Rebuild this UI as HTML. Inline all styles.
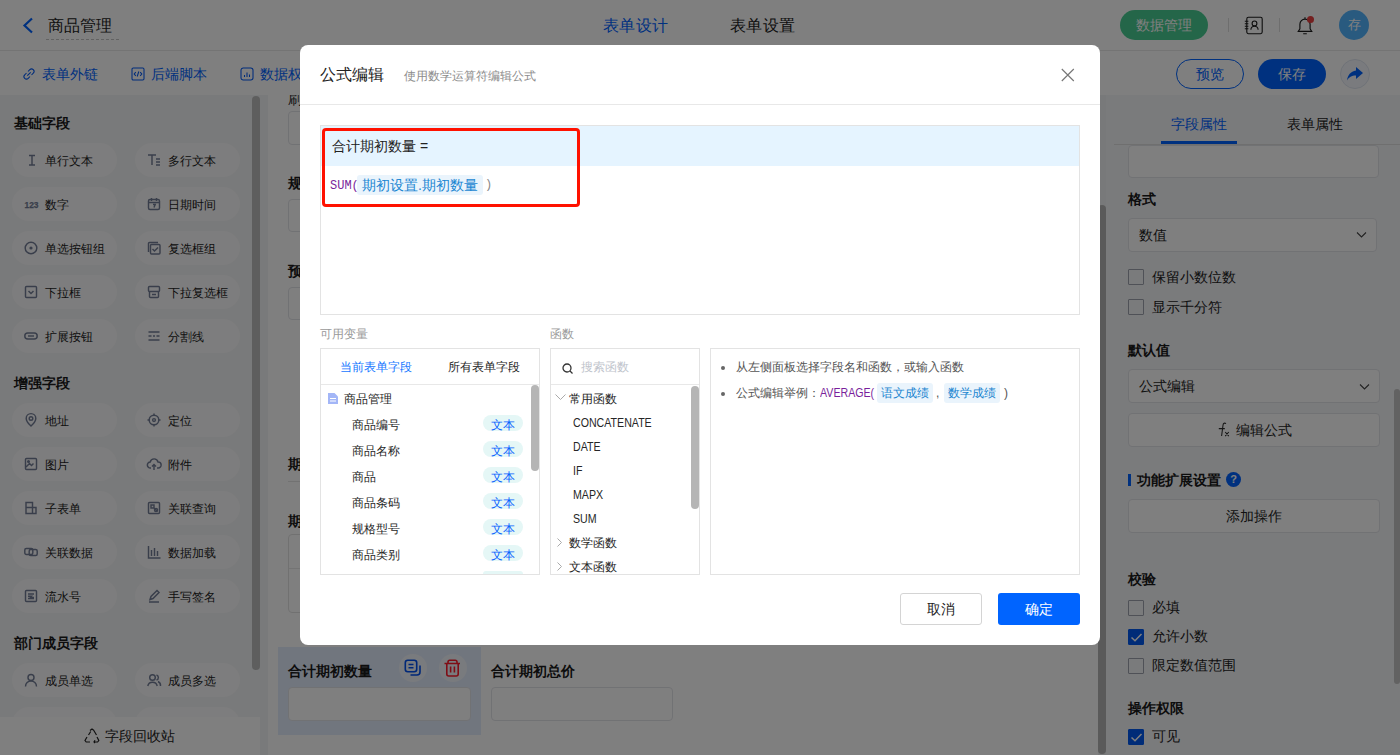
<!DOCTYPE html>
<html><head><meta charset="utf-8">
<style>
*{box-sizing:border-box;margin:0;padding:0}
html,body{width:1400px;height:755px;overflow:hidden}
body{position:relative;font-family:"Liberation Sans",sans-serif;background:#fff;color:#333;font-size:14px}
.a{position:absolute;white-space:nowrap}
svg{overflow:visible}
.chip{position:absolute;width:105px;height:34px;border-radius:17px;background:#fbfbfc}
.ct{position:absolute;font-size:12px;line-height:18px;color:#222}
.sect{position:absolute;left:14px;font-size:14px;font-weight:bold;color:#1a1a1a;line-height:20px}
.inp{position:absolute;border:1px solid #e2e4e9;border-radius:4px;background:#fff}
.cb{position:absolute;left:1128px;width:16px;height:16px;border:1.2px solid #9fa3ae;border-radius:1px;background:transparent}
.cb.on{background:#0058f0;border-color:#0058f0}
.lbl{position:absolute;font-size:14px;color:#222;line-height:20px}
.bl{position:absolute;font-size:14px;font-weight:bold;color:#1a1a1a;line-height:20px}
.ov{position:absolute;left:0;top:0;width:1400px;height:755px;background:rgba(0,0,0,.5)}
.t12{position:absolute;font-size:12px;line-height:17px;color:#262626;white-space:nowrap}
.tag{position:absolute;left:483px;width:40px;height:16px;border-radius:8px;background:#e5f7f6;color:#0a64ff;font-size:12px;line-height:16px;padding-top:2px;text-align:center}
</style></head><body>

<div class="a" style="left:0;top:0;width:1400px;height:51px;background:#fff;border-bottom:1px solid #e9e9e9"></div>
<svg class="a" style="left:22px;top:17px" width="12" height="17" viewBox="0 0 12 17"><path d="M10 1.5L2.5 8.5L10 15.5" fill="none" stroke="#0062ff" stroke-width="2.2"/></svg>
<div class="a" style="left:48px;top:15px;font-size:16px;line-height:22px;color:#222">商品管理</div>
<div class="a" style="left:46px;top:39px;width:73px;border-top:1px dashed #c4c4c4"></div>
<div class="a" style="left:603px;top:15px;font-size:16px;line-height:22px;letter-spacing:0.4px;color:#0062ff">表单设计</div>
<div class="a" style="left:730px;top:15px;font-size:16px;line-height:22px;letter-spacing:0.4px;color:#222">表单设置</div>
<div class="a" style="left:1120px;top:10px;width:88px;height:30px;border-radius:15px;background:#48cc92"></div>
<div class="a" style="left:1136px;top:15px;font-size:14px;line-height:20px;color:#fff">数据管理</div>
<div class="a" style="left:1228px;top:18px;width:1px;height:14px;background:#ddd"></div>
<div class="a" style="left:1279px;top:18px;width:1px;height:14px;background:#ddd"></div>
<svg class="a" style="left:1244px;top:16px" width="20" height="19" viewBox="0 0 20 19" fill="none" stroke="#1a1a1a" stroke-width="1.1"><rect x="2.8" y="1.3" width="15.4" height="16.4" rx="1.6"/><path d="M0.8 5.2h3.6M0.8 7.7h3.6M0.8 10.2h3.6M0.8 12.7h3.6"/><circle cx="10.5" cy="7.4" r="2.4"/><path d="M6.9 13.8a3.6 3.6 0 0 1 7.2 0"/></svg>
<svg class="a" style="left:1296px;top:15px" width="18" height="20" viewBox="0 0 18 20" fill="none" stroke="#1a1a1a" stroke-width="1.15"><path d="M2.3 16.3h13.4l-1.6-2.4V9.2a5.1 5.1 0 0 0-10.2 0v4.7z M7.2 18.7h3.6 M9 2.2v1.8"/></svg>
<div class="a" style="left:1307px;top:16px;width:7px;height:7px;border-radius:4px;background:#e84040"></div>
<div class="a" style="left:1339px;top:10px;width:30px;height:30px;border-radius:15px;background:#52b4ff;color:#fff;font-size:13px;line-height:30px;text-align:center">存</div>
<div class="a" style="left:0;top:51px;width:1400px;height:44px;background:#fff"></div>
<svg class="a" style="left:22px;top:67px" width="14" height="14" viewBox="0 0 14 14" fill="none" stroke="#0058f5" stroke-width="1.05"><path d="M6 4.5l1.8-1.8a2.4 2.4 0 0 1 3.5 3.5L9.5 8M8 9.5l-1.8 1.8a2.4 2.4 0 0 1-3.5-3.5L4.5 6M5.3 8.7l3.4-3.4"/></svg>
<div class="a" style="left:42px;top:64px;font-size:14px;line-height:20px;color:#0062ff">表单外链</div>
<svg class="a" style="left:131px;top:67px" width="14" height="14" viewBox="0 0 14 14" fill="none" stroke="#0058f5" stroke-width="1.05"><rect x="1" y="1" width="12" height="12" rx="1.2"/><path d="M4.8 5.2L3.2 7l1.6 1.8M9.2 5.2L10.8 7 9.2 8.8M7.8 4.5l-1.6 5"/></svg>
<div class="a" style="left:151px;top:64px;font-size:14px;line-height:20px;color:#0062ff">后端脚本</div>
<svg class="a" style="left:240px;top:67px" width="14" height="14" viewBox="0 0 14 14" fill="none" stroke="#0058f5" stroke-width="1.05"><rect x="1" y="1" width="12" height="12" rx="2.2"/><path d="M4.5 10V8M7 10V5.5M9.5 10V7.5"/></svg>
<div class="a" style="left:260px;top:64px;font-size:14px;line-height:20px;color:#0062ff">数据权限</div>
<div class="a" style="left:1176px;top:59px;width:68px;height:30px;border-radius:15px;border:1px solid #0062ff;background:#fff;color:#0062ff;font-size:14px;line-height:28px;text-align:center">预览</div>
<div class="a" style="left:1258px;top:59px;width:68px;height:30px;border-radius:15px;background:#0062ff;color:#fff;font-size:14px;line-height:30px;text-align:center">保存</div>
<div class="a" style="left:1340px;top:59px;width:30px;height:30px;border-radius:15px;border:1px solid #dfe5f0;background:#f4f7fc"></div>
<svg class="a" style="left:1346px;top:66px" width="18" height="16" viewBox="0 0 18 16"><path d="M10 1l7 6-7 6V9.5C5.5 9.5 3 11 1 14.5 1.8 9 4.5 5.5 10 4.5z" fill="#0062ff"/></svg>
<div class="a" style="left:0;top:95px;width:268px;height:660px;background:#f3f4f6"></div>
<div class="sect" style="top:113px">基础字段</div>
<div class="sect" style="top:373px">增强字段</div>
<div class="sect" style="top:633px">部门成员字段</div>
<div class="chip" style="left:12px;top:143px"></div>
<svg class="a" style="left:24px;top:153px" width="14" height="14" viewBox="0 0 14 14" fill="none" stroke="#737d96" stroke-width="1.45"><path d="M5 2.5h6M5 12h6M8 2.5v9.5"/></svg>
<div class="ct" style="left:45px;top:152px">单行文本</div>
<div class="chip" style="left:135px;top:143px"></div>
<svg class="a" style="left:147px;top:153px" width="14" height="14" viewBox="0 0 14 14" fill="none" stroke="#737d96" stroke-width="1.45"><path d="M1 2h8M5 2v10M9 6h4M9 9h4M9 12h4"/></svg>
<div class="ct" style="left:168px;top:152px">多行文本</div>
<div class="chip" style="left:12px;top:187px"></div>
<svg class="a" style="left:24px;top:197px" width="14" height="14" viewBox="0 0 14 14" fill="none" stroke="#737d96" stroke-width="1.45"><text x="0.5" y="10.5" font-size="9" font-weight="bold" textLength="14" lengthAdjust="spacingAndGlyphs" fill="#737d96" stroke="#737d96" stroke-width="0.25" font-family="Liberation Sans">123</text></svg>
<div class="ct" style="left:45px;top:196px">数字</div>
<div class="chip" style="left:135px;top:187px"></div>
<svg class="a" style="left:147px;top:197px" width="14" height="14" viewBox="0 0 14 14" fill="none" stroke="#737d96" stroke-width="1.45"><rect x="1.5" y="2.5" width="11" height="10" rx="1.5"/><path d="M1.5 5.5h11M4.5 1v3M9.5 1v3M6 7.5h2.2l-1.2 3"/></svg>
<div class="ct" style="left:168px;top:196px">日期时间</div>
<div class="chip" style="left:12px;top:231px"></div>
<svg class="a" style="left:24px;top:241px" width="14" height="14" viewBox="0 0 14 14" fill="none" stroke="#737d96" stroke-width="1.45"><circle cx="7" cy="7" r="5.8"/><circle cx="7" cy="7" r="1.6" fill="#737d96" stroke="none"/></svg>
<div class="ct" style="left:45px;top:240px">单选按钮组</div>
<div class="chip" style="left:135px;top:231px"></div>
<svg class="a" style="left:147px;top:241px" width="14" height="14" viewBox="0 0 14 14" fill="none" stroke="#737d96" stroke-width="1.45"><path d="M1.5 11V2.5a1 1 0 0 1 1-1H11"/><rect x="3.5" y="3.5" width="9.5" height="9.5" rx="1"/><path d="M5.5 8l2 2 3.5-3.5"/></svg>
<div class="ct" style="left:168px;top:240px">复选框组</div>
<div class="chip" style="left:12px;top:275px"></div>
<svg class="a" style="left:24px;top:285px" width="14" height="14" viewBox="0 0 14 14" fill="none" stroke="#737d96" stroke-width="1.45"><rect x="1.5" y="1.5" width="11" height="11" rx="1"/><path d="M4.5 6l2.5 2.5L9.5 6"/></svg>
<div class="ct" style="left:45px;top:284px">下拉框</div>
<div class="chip" style="left:135px;top:275px"></div>
<svg class="a" style="left:147px;top:285px" width="14" height="14" viewBox="0 0 14 14" fill="none" stroke="#737d96" stroke-width="1.45"><rect x="1.5" y="1.5" width="11" height="5" rx="1"/><path d="M2.5 6.5v5a1 1 0 0 0 1 1h7a1 1 0 0 0 1-1v-5M5 9.5h4"/></svg>
<div class="ct" style="left:168px;top:284px">下拉复选框</div>
<div class="chip" style="left:12px;top:319px"></div>
<svg class="a" style="left:24px;top:329px" width="14" height="14" viewBox="0 0 14 14" fill="none" stroke="#737d96" stroke-width="1.45"><rect x="0.8" y="4" width="12.4" height="6" rx="3"/><path d="M4 7h6"/></svg>
<div class="ct" style="left:45px;top:328px">扩展按钮</div>
<div class="chip" style="left:135px;top:319px"></div>
<svg class="a" style="left:147px;top:329px" width="14" height="14" viewBox="0 0 14 14" fill="none" stroke="#737d96" stroke-width="1.45"><path d="M1.5 3h11M1.5 7h3M6 7h2M9.5 7h3M1.5 11h11"/></svg>
<div class="ct" style="left:168px;top:328px">分割线</div>
<div class="chip" style="left:12px;top:403px"></div>
<svg class="a" style="left:24px;top:413px" width="14" height="14" viewBox="0 0 14 14" fill="none" stroke="#737d96" stroke-width="1.45"><path d="M7 13s-4.8-4.3-4.8-7.6a4.8 4.8 0 0 1 9.6 0C11.8 8.7 7 13 7 13z"/><circle cx="7" cy="5.5" r="1.8"/></svg>
<div class="ct" style="left:45px;top:412px">地址</div>
<div class="chip" style="left:135px;top:403px"></div>
<svg class="a" style="left:147px;top:413px" width="14" height="14" viewBox="0 0 14 14" fill="none" stroke="#737d96" stroke-width="1.45"><circle cx="7" cy="7" r="4.8"/><circle cx="7" cy="7" r="1.4"/><path d="M7 0.5v2.5M7 11v2.5M0.5 7h2.5M11 7h2.5"/></svg>
<div class="ct" style="left:168px;top:412px">定位</div>
<div class="chip" style="left:12px;top:447px"></div>
<svg class="a" style="left:24px;top:457px" width="14" height="14" viewBox="0 0 14 14" fill="none" stroke="#737d96" stroke-width="1.45"><rect x="1.5" y="1.5" width="11" height="11" rx="1"/><path d="M2 10l3.5-3.5 2 2 2-2"/><circle cx="4.5" cy="4.5" r="0.8"/></svg>
<div class="ct" style="left:45px;top:456px">图片</div>
<div class="chip" style="left:135px;top:447px"></div>
<svg class="a" style="left:147px;top:457px" width="14" height="14" viewBox="0 0 14 14" fill="none" stroke="#737d96" stroke-width="1.45"><path d="M4 11H3.5a3 3 0 0 1-.3-6A4 4 0 0 1 11 5a3 3 0 0 1 .3 6H10M7 13V7.5M5 9.5l2-2 2 2"/></svg>
<div class="ct" style="left:168px;top:456px">附件</div>
<div class="chip" style="left:12px;top:491px"></div>
<svg class="a" style="left:24px;top:501px" width="14" height="14" viewBox="0 0 14 14" fill="none" stroke="#737d96" stroke-width="1.45"><path d="M2 1.5h6.5v11H2zM2 6.5h6.5M8.5 6.5H12v6H8.5"/></svg>
<div class="ct" style="left:45px;top:500px">子表单</div>
<div class="chip" style="left:135px;top:491px"></div>
<svg class="a" style="left:147px;top:501px" width="14" height="14" viewBox="0 0 14 14" fill="none" stroke="#737d96" stroke-width="1.45"><rect x="1.5" y="1.5" width="11" height="11" rx="1"/><path d="M4 4h3v3H4zM7 7l3.5 3.5"/><circle cx="9" cy="9" r="1.5"/></svg>
<div class="ct" style="left:168px;top:500px">关联查询</div>
<div class="chip" style="left:12px;top:535px"></div>
<svg class="a" style="left:24px;top:545px" width="14" height="14" viewBox="0 0 14 14" fill="none" stroke="#737d96" stroke-width="1.45"><rect x="0.8" y="3.5" width="8" height="6" rx="1.5"/><rect x="5.2" y="4.5" width="8" height="6" rx="1.5"/></svg>
<div class="ct" style="left:45px;top:544px">关联数据</div>
<div class="chip" style="left:135px;top:535px"></div>
<svg class="a" style="left:147px;top:545px" width="14" height="14" viewBox="0 0 14 14" fill="none" stroke="#737d96" stroke-width="1.45"><path d="M1.5 1v12h12M4.5 5v6M7.5 3v8M10.5 6v5"/></svg>
<div class="ct" style="left:168px;top:544px">数据加载</div>
<div class="chip" style="left:12px;top:579px"></div>
<svg class="a" style="left:24px;top:589px" width="14" height="14" viewBox="0 0 14 14" fill="none" stroke="#737d96" stroke-width="1.45"><rect x="1.5" y="1.5" width="11" height="11" rx="1"/><path d="M4 5h6M4 7.2h3.5l-1 1.2H10M4 9.5h6"/></svg>
<div class="ct" style="left:45px;top:588px">流水号</div>
<div class="chip" style="left:135px;top:579px"></div>
<svg class="a" style="left:147px;top:589px" width="14" height="14" viewBox="0 0 14 14" fill="none" stroke="#737d96" stroke-width="1.45"><path d="M2 13h10M3 10.5l1-3 6-6 2 2-6 6z"/></svg>
<div class="ct" style="left:168px;top:588px">手写签名</div>
<div class="chip" style="left:12px;top:663px"></div>
<svg class="a" style="left:24px;top:673px" width="14" height="14" viewBox="0 0 14 14" fill="none" stroke="#737d96" stroke-width="1.45"><circle cx="7" cy="4.5" r="3"/><path d="M1.5 13.5a5.5 5.5 0 0 1 11 0"/></svg>
<div class="ct" style="left:45px;top:672px">成员单选</div>
<div class="chip" style="left:135px;top:663px"></div>
<svg class="a" style="left:147px;top:673px" width="14" height="14" viewBox="0 0 14 14" fill="none" stroke="#737d96" stroke-width="1.45"><circle cx="5.5" cy="4.5" r="2.8"/><path d="M0.8 13a4.8 4.8 0 0 1 9.4 0M9.5 2a2.6 2.6 0 0 1 0 5M11 8.5a4.5 4.5 0 0 1 2.5 4.5"/></svg>
<div class="ct" style="left:168px;top:672px">成员多选</div>
<div class="chip" style="left:12px;top:707px"></div>
<div class="chip" style="left:135px;top:707px"></div>
<div class="a" style="left:252px;top:96px;width:8px;height:574px;border-radius:4px;background:#bdbdbd"></div>
<div class="a" style="left:0;top:717px;width:260px;height:38px;background:#fff"></div>
<svg class="a" style="left:84px;top:728px" width="16" height="15" viewBox="0 0 16 15" fill="none" stroke="#222" stroke-width="1.2"><path d="M6 2.5L8 1l2 1.5 M9.5 2l3 5 M13 9l1.8 3.5-1.2 1.5H10 M6 14H2.2L1 12.5 3 9 M4.5 7l2.2-3.5 M11 12.2l-1 1.8 1 1"/></svg>
<div class="a" style="left:105px;top:726px;font-size:14px;line-height:20px;color:#222">字段回收站</div>
<div class="a" style="left:268px;top:95px;width:832px;height:660px;background:#fff"></div>
<div class="a" style="left:1098px;top:95px;width:8px;height:660px;background:#f1f2f4"></div>
<div class="a" style="left:1098px;top:205px;width:8px;height:549px;border-radius:4px;background:#b4b4b4"></div>
<div class="a" style="left:268px;top:95px;width:40px;height:14px;overflow:hidden"><div class="a" style="left:20px;top:-6px;font-size:14px;line-height:20px;color:#333">刷新</div></div>
<div class="inp" style="left:288px;top:111px;width:400px;height:34px"></div>
<div class="bl" style="left:288px;top:173px">规格型号</div>
<div class="inp" style="left:288px;top:199px;width:400px;height:33px"></div>
<div class="bl" style="left:288px;top:261px">预计数量</div>
<div class="inp" style="left:288px;top:287px;width:400px;height:33px"></div>
<div class="bl" style="left:288px;top:454px">期初设置</div>
<div class="a" style="left:288px;top:481px;width:790px;height:1px;background:#e4e4e4"></div>
<div class="bl" style="left:288px;top:511px">期初设置</div>
<div class="inp" style="left:288px;top:534px;width:790px;height:79px;border-color:#e2e2e2"></div>
<div class="a" style="left:289px;top:568px;width:788px;height:1px;background:#e8e8e8"></div>
<div class="a" style="left:278px;top:647px;width:203px;height:88px;background:#e3ecfd"></div>
<div class="bl" style="left:288px;top:661px">合计期初数量</div>
<div class="inp" style="left:288px;top:687px;width:183px;height:34px"></div>
<div class="a" style="left:399px;top:654px;width:28px;height:28px;border-radius:14px;background:#f3f6fc"></div>
<div class="a" style="left:439px;top:654px;width:28px;height:28px;border-radius:14px;background:#f3f6fc"></div>
<svg class="a" style="left:398px;top:652px" width="72" height="34" viewBox="0 0 72 34" fill="none" stroke-width="1.6"><g stroke="#0050f0"><rect x="7.3" y="8.3" width="11.4" height="11.4" rx="2.5"/><path d="M10.5 12.5h5M10.5 15.8h5M22 13.5v6.5a3 3 0 0 1-3 3h-6.5"/></g><g stroke="#ff1a2a"><path d="M46.5 11.5h15.5M50 11.5V10a1.8 1.8 0 0 1 1.8-1.8h5.4A1.8 1.8 0 0 1 59 10v1.5M48.8 11.5v10.5a2 2 0 0 0 2 2h7.4a2 2 0 0 0 2-2V11.5M52.6 14.5v6M56.4 14.5v6"/></g></svg>
<div class="bl" style="left:491px;top:661px">合计期初总价</div>
<div class="inp" style="left:491px;top:687px;width:182px;height:34px"></div>
<div class="a" style="left:1106px;top:95px;width:294px;height:660px;background:#f5f6f9"></div>
<div class="a" style="left:1171px;top:114px;font-size:14px;line-height:20px;color:#0062ff">字段属性</div>
<div class="a" style="left:1287px;top:114px;font-size:14px;line-height:20px;color:#222">表单属性</div>
<div class="a" style="left:1114px;top:144px;width:286px;height:1px;background:#dedede"></div>
<div class="a" style="left:1161px;top:141px;width:76px;height:3px;background:#0062ff"></div>
<div class="inp" style="left:1128px;top:145px;width:251px;height:33px"></div>
<div class="bl" style="left:1128px;top:189px">格式</div>
<div class="inp" style="left:1128px;top:218px;width:249px;height:34px"></div>
<div class="lbl" style="left:1139px;top:225px">数值</div>
<svg class="a" style="left:1356px;top:231px" width="11" height="8" viewBox="0 0 11 8" fill="none" stroke="#444" stroke-width="1.1"><path d="M1 1.5l4.5 4.5L10 1.5"/></svg>
<div class="cb" style="top:269px"></div><div class="lbl" style="left:1152px;top:267px">保留小数位数</div>
<div class="cb" style="top:299px"></div><div class="lbl" style="left:1152px;top:297px">显示千分符</div>
<div class="bl" style="left:1128px;top:340px">默认值</div>
<div class="inp" style="left:1128px;top:369px;width:252px;height:34px"></div>
<div class="lbl" style="left:1139px;top:376px">公式编辑</div>
<svg class="a" style="left:1359px;top:383px" width="11" height="8" viewBox="0 0 11 8" fill="none" stroke="#444" stroke-width="1.1"><path d="M1 1.5l4.5 4.5L10 1.5"/></svg>
<div class="inp" style="left:1128px;top:413px;width:252px;height:34px"></div>
<svg class="a" style="left:1217px;top:422px" width="14" height="15" viewBox="0 0 14 15" fill="none" stroke="#2a2a2a" stroke-width="1.05"><path d="M9 1.6C7.6 0.6 6.2 1.2 6 3.2L4.6 14M1.8 6.6h6M8.2 10l3.6 4.2M11.8 10l-3.6 4.2"/></svg>
<div class="lbl" style="left:1236px;top:420px">编辑公式</div>
<div class="a" style="left:1128px;top:474px;width:3px;height:12px;background:#0062ff"></div>
<div class="bl" style="left:1137px;top:470px">功能扩展设置</div>
<div class="a" style="left:1226px;top:472px;width:15px;height:15px;border-radius:8px;background:#0062ff;color:#fff;font-size:11px;line-height:15px;text-align:center;font-weight:bold">?</div>
<div class="inp" style="left:1128px;top:499px;width:252px;height:34px"></div>
<div class="lbl" style="left:1226px;top:506px">添加操作</div>
<div class="bl" style="left:1128px;top:569px">校验</div>
<div class="cb" style="top:600px"></div><div class="lbl" style="left:1152px;top:597px">必填</div>
<div class="cb on" style="top:629px"><svg style="position:absolute;left:1px;top:2px" width="13" height="11" viewBox="0 0 13 11" fill="none" stroke="#fff" stroke-width="1.5"><path d="M1.5 5.5l3.5 3.3 6.5-6.8"/></svg></div><div class="lbl" style="left:1152px;top:626px">允许小数</div>
<div class="cb" style="top:658px"></div><div class="lbl" style="left:1152px;top:655px">限定数值范围</div>
<div class="bl" style="left:1128px;top:698px">操作权限</div>
<div class="cb on" style="top:729px"><svg style="position:absolute;left:1px;top:2px" width="13" height="11" viewBox="0 0 13 11" fill="none" stroke="#fff" stroke-width="1.5"><path d="M1.5 5.5l3.5 3.3 6.5-6.8"/></svg></div><div class="lbl" style="left:1152px;top:726px">可见</div>
<div class="a" style="left:1394px;top:389px;width:6px;height:295px;border-radius:3px;background:#c4c4c4"></div>
<div class="ov"></div>
<div class="a" style="left:300px;top:45px;width:800px;height:600px;background:#fff;border-radius:8px"></div>
<div class="a" style="left:320px;top:64px;font-size:16px;line-height:22px;color:#222">公式编辑</div>
<div class="a" style="left:404px;top:68px;font-size:12px;line-height:17px;color:#8c8c8c">使用数学运算符编辑公式</div>
<div class="a" style="left:300px;top:104px;width:800px;height:1px;background:#e8e8e8"></div>
<svg class="a" style="left:1061px;top:68px" width="14" height="14" viewBox="0 0 14 14"><path d="M0.8 1L12.8 13M12.8 1L0.8 13" stroke="#777" stroke-width="1.15"/></svg>
<div class="a" style="left:320px;top:125px;width:760px;height:190px;border:1px solid #e3e3e3"></div>
<div class="a" style="left:321px;top:126px;width:758px;height:40px;background:#e5f4ff"></div>
<div class="a" style="left:332px;top:136px;font-size:14px;line-height:20px;color:#222">合计期初数量 =</div>
<div class="a" style="left:330px;top:178px;font-family:'Liberation Mono',monospace;font-size:12px;line-height:16px;color:#7a1f9c">SUM(</div>
<div class="a" style="left:357px;top:175px;width:126px;height:20px;border-radius:3px;background:#eaf4fc"></div>
<div class="a" style="left:362px;top:175px;font-size:14px;line-height:20px;color:#1a86d2">期初设置.期初数量</div>
<div class="a" style="left:485px;top:177px;font-family:'Liberation Mono',monospace;font-size:12px;line-height:16px;color:#888">)</div>
<div class="a" style="left:322px;top:128px;width:258px;height:79px;border:3px solid #ff1100;border-radius:4px"></div>
<div class="t12" style="left:320px;top:326px;color:#999">可用变量</div>
<div class="t12" style="left:550px;top:326px;color:#999">函数</div>
<div class="a" style="left:320px;top:348px;width:220px;height:227px;border:1px solid #e3e3e3"></div>
<div class="a" style="left:321px;top:384px;width:218px;height:1px;background:#e8e8e8"></div>
<div class="t12" style="left:340px;top:359px;color:#1677ff">当前表单字段</div>
<div class="t12" style="left:448px;top:359px">所有表单字段</div>
<svg class="a" style="left:328px;top:393px" width="10" height="11" viewBox="0 0 10 11"><path d="M0 0h6.5L10 3.5V11H0z" fill="#a3b6f7"/><path d="M2 5.5h6M2 8h6" stroke="#fff" stroke-width="1"/></svg>
<div class="t12" style="left:344px;top:391px">商品管理</div>
<div class="t12" style="left:352px;top:417px">商品编号</div>
<div class="tag" style="top:415px">文本</div>
<div class="t12" style="left:352px;top:443px">商品名称</div>
<div class="tag" style="top:441px">文本</div>
<div class="t12" style="left:352px;top:469px">商品</div>
<div class="tag" style="top:467px">文本</div>
<div class="t12" style="left:352px;top:495px">商品条码</div>
<div class="tag" style="top:493px">文本</div>
<div class="t12" style="left:352px;top:521px">规格型号</div>
<div class="tag" style="top:519px">文本</div>
<div class="t12" style="left:352px;top:547px">商品类别</div>
<div class="tag" style="top:545px">文本</div>
<div class="tag" style="top:571px;height:3px;border-radius:8px 8px 0 0"></div>
<div class="a" style="left:321px;top:574px;width:218px;height:1px;background:#e3e3e3"></div>
<div class="a" style="left:531px;top:385px;width:8px;height:86px;border-radius:4px;background:#b5b5b5"></div>
<div class="a" style="left:550px;top:348px;width:150px;height:227px;border:1px solid #e3e3e3;overflow:hidden"></div>
<div class="a" style="left:551px;top:384px;width:148px;height:1px;background:#e8e8e8"></div>
<svg class="a" style="left:562px;top:363px" width="11" height="11" viewBox="0 0 11 11" fill="none" stroke="#333" stroke-width="1.3"><circle cx="5" cy="5" r="4"/><path d="M8 8l2.5 2.5"/></svg>
<div class="t12" style="left:581px;top:359px;color:#c0c4cc">搜索函数</div>
<svg class="a" style="left:555px;top:394px" width="11" height="7" viewBox="0 0 11 7" fill="none" stroke="#aaa" stroke-width="1"><path d="M0.5 0.5l5 5 5-5"/></svg>
<div class="t12" style="left:569px;top:391px">常用函数</div>
<div class="t12" style="left:573px;top:415px;font-size:12.5px;transform:scaleX(0.85);transform-origin:0 0">CONCATENATE</div>
<div class="t12" style="left:573px;top:439px;font-size:12.5px;transform:scaleX(0.85);transform-origin:0 0">DATE</div>
<div class="t12" style="left:573px;top:463px;font-size:12.5px;transform:scaleX(0.85);transform-origin:0 0">IF</div>
<div class="t12" style="left:573px;top:487px;font-size:12.5px;transform:scaleX(0.85);transform-origin:0 0">MAPX</div>
<div class="t12" style="left:573px;top:511px;font-size:12.5px;transform:scaleX(0.85);transform-origin:0 0">SUM</div>
<svg class="a" style="left:557px;top:538px" width="5" height="9" viewBox="0 0 5 9" fill="none" stroke="#aaa" stroke-width="1"><path d="M0.5 0.5l4 4-4 4"/></svg>
<div class="t12" style="left:569px;top:535px">数学函数</div>
<svg class="a" style="left:557px;top:562px" width="5" height="9" viewBox="0 0 5 9" fill="none" stroke="#aaa" stroke-width="1"><path d="M0.5 0.5l4 4-4 4"/></svg>
<div class="t12" style="left:569px;top:559px">文本函数</div>
<div class="a" style="left:691px;top:386px;width:8px;height:123px;border-radius:4px;background:#b5b5b5"></div>
<div class="a" style="left:710px;top:348px;width:370px;height:227px;border:1px solid #e3e3e3"></div>
<div class="a" style="left:721px;top:366px;width:4px;height:4px;border-radius:2px;background:#666"></div>
<div class="a" style="left:721px;top:392px;width:4px;height:4px;border-radius:2px;background:#666"></div>
<div class="t12" style="left:736px;top:359px;color:#555">从左侧面板选择字段名和函数，或输入函数</div>
<div class="t12" style="left:736px;top:385px;color:#555">公式编辑举例：</div>
<div class="t12" style="left:820px;top:385px;color:#7a1f9c;font-size:12.5px;transform:scaleX(0.85);transform-origin:0 0">AVERAGE(</div>
<div class="a" style="left:877px;top:383px;width:56px;height:20px;border-radius:3px;background:#eaf4fc"></div>
<div class="t12" style="left:881px;top:385px;color:#1a85d0">语文成绩</div>
<div class="t12" style="left:936px;top:385px;color:#555">,</div>
<div class="a" style="left:944px;top:383px;width:56px;height:20px;border-radius:3px;background:#eaf4fc"></div>
<div class="t12" style="left:948px;top:385px;color:#1a85d0">数学成绩</div>
<div class="t12" style="left:1004px;top:385px;color:#555">)</div>
<div class="a" style="left:900px;top:593px;width:82px;height:32px;border:1px solid #d4d4d4;border-radius:3px;background:#fff;font-size:14px;line-height:30px;text-align:center;color:#222">取消</div>
<div class="a" style="left:998px;top:593px;width:82px;height:32px;border-radius:3px;background:#0064ff;font-size:14px;line-height:32px;text-align:center;color:#fff">确定</div>
</body></html>
